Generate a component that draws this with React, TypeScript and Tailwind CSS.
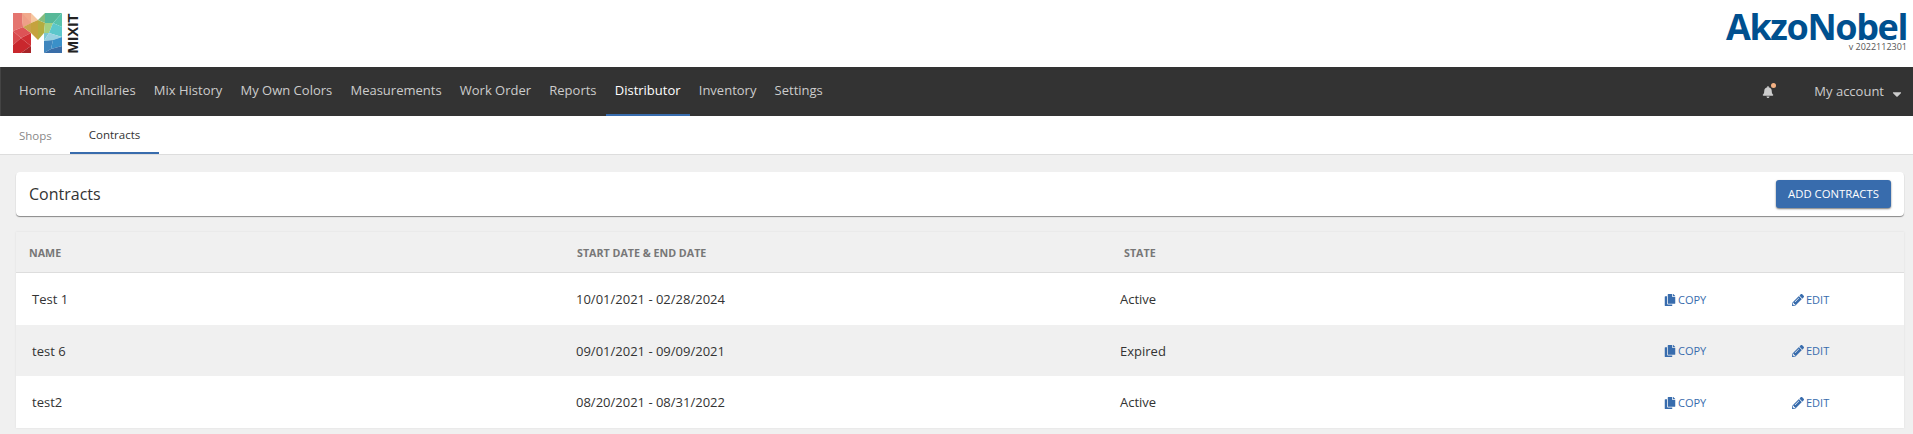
import { FaBell, FaCaretDown, FaCopy, FaPencilAlt } from "react-icons/fa";

const navItems = ["Home", "Ancillaries", "Mix History", "My Own Colors", "Measurements", "Work Order", "Reports", "Distributor", "Inventory", "Settings"];

const contracts = [
  { name: "Test 1", dates: "10/01/2021 - 02/28/2024", state: "Active" },
  { name: "test 6", dates: "09/01/2021 - 09/09/2021", state: "Expired" },
  { name: "test2", dates: "08/20/2021 - 08/31/2022", state: "Active" },
];

const shards: [string, string][] = [
  ["0,0 9,0 10,14 0,18", "#e4756f"],
  ["9,0 18,0 18,10 10,14", "#f1a98c"],
  ["18,0 25,7 18,10", "#f5c6a0"],
  ["9,0 18,10 10,14", "#ee9f87"],
  ["0,18 10,14 18,20 8,25", "#dd5356"],
  ["0,18 8,25 0,32", "#d84a4d"],
  ["10,14 18,10 18,20", "#c9a24c"],
  ["8,25 18,20 18,33", "#cf2e33"],
  ["0,32 8,25 18,33 8,40 0,40", "#c9272d"],
  ["8,40 18,33 18,40", "#a82428"],
  ["18,10 25,7 25,27 18,20", "#c5a23e"],
  ["25,7 32,10 31,20 25,27", "#b3ad3f"],
  ["25,7 32,0 32,10", "#86bc7c"],
  ["32,0 49,0 40,10 32,10", "#57b898"],
  ["32,10 40,10 36,20 31,20", "#a3d080"],
  ["40,10 49,0 49,14", "#58c2ab"],
  ["40,10 49,14 49,24 36,20", "#5cc7cb"],
  ["31,20 36,20 31,28", "#7cc8d2"],
  ["36,20 49,24 40,27 31,28", "#97d1e0"],
  ["31,28 40,27 38,36 31,40", "#3f86bd"],
  ["40,27 49,24 49,33 38,36", "#3a90c8"],
  ["31,40 38,36 49,33 49,40", "#3a6ea8"],
];

function MixitLogo() {
  return (
    <div className="flex items-center gap-[3px] self-start">
      <svg width="50" height="40" viewBox="0 0 50 40">
        {shards.map(([points, fill]) => (
          <polygon key={points} points={points} fill={fill} />
        ))}
      </svg>
      <div className="h-10 w-[12px] flex items-center justify-center">
        <span className="-rotate-90 shrink-0 whitespace-nowrap font-['Liberation_Sans',sans-serif] font-bold text-[15px] leading-none text-[#222]">MIXIT</span>
      </div>
    </div>
  );
}

export default function App() {
  return (
    <div className="min-h-[434px] bg-[#f0f0f0] font-['Open_Sans',sans-serif] text-[#333]">
      <header className="h-[67px] bg-white flex justify-between pl-[13px] pr-[6px] pt-[13px]">
        <MixitLogo />
        <div className="flex flex-col items-end">
          <div className="text-[36px] leading-[28px] font-bold text-[#00508f] tracking-[-1.4px]">AkzoNobel</div>
          <div className="text-[9px] leading-[11px] text-[#555]">v 2022112301</div>
        </div>
      </header>

      <nav className="h-[49px] bg-[#333] flex items-stretch pl-[9px] pr-[9px] border-l border-[#444]">
        {navItems.map((item) => (
          <div
            key={item}
            className={`flex items-center px-[9.1px] pt-[1px] text-[13px] border-b-2 ${item === "Distributor" ? "text-white font-medium border-[#386cad]" : "text-[#ccc] border-transparent"}`}
          >
            {item}
          </div>
        ))}
        <div className="ml-auto flex items-center text-[#ccc]">
          <div className="relative mr-[40px]">
            <FaBell className="text-[12px]" />
            <span className="absolute -top-[3px] -right-[2px] w-[5px] h-[5px] rounded-full bg-[#f4b183]" />
          </div>
          <span className="text-[13px] mr-[6px]">My account</span>
          <FaCaretDown className="text-[14px] mt-[4px]" />
        </div>
      </nav>

      <div className="h-[39px] bg-white border-b border-[#ddd] flex text-[11.5px]">
        <div className="w-[70px] pl-[19px] pt-[2px] flex items-center text-[#888]">Shops</div>
        <div className="w-[89px] pt-[2px] flex items-center justify-center border-b-2 border-[#386cad]">Contracts</div>
      </div>

      <div className="px-[16px] pr-[9px] pt-[17px]">
        <div className="h-[44px] bg-white rounded-[4px] shadow-[0_1px_1px_#888] flex items-center justify-between pl-[13px] pr-[13px]">
          <span className="text-[16px]">Contracts</span>
          <button className="h-[28px] w-[115px] rounded-[3px] bg-[#386cad] text-white text-[11.3px] shadow-[0_1px_2px_#777]">ADD CONTRACTS</button>
        </div>

        <div className="mt-[16px] shadow-[0_0_2px_#ddd]">
          <div className="h-[41px] pt-[2px] flex items-center border-b border-[#ddd] text-[10.7px] font-bold text-[#777]">
            <div className="w-[548px] pl-[13px]">NAME</div>
            <div className="w-[547px] pl-[13px]">START DATE &amp; END DATE</div>
            <div className="pl-[13px]">STATE</div>
          </div>
          {contracts.map((row, i) => (
            <div key={row.name} className={`h-[51.5px] pt-[2px] flex items-center text-[13px] ${i % 2 === 0 ? "bg-white" : "bg-[#f0f0f0]"}`}>
              <div className="w-[560px] pl-[16px]">{row.name}</div>
              <div className="w-[544px]">{row.dates}</div>
              <div className="w-[544px]">{row.state}</div>
              <div className="w-[128px] flex items-center gap-[2px] text-[11px] text-[#386cad]">
                <FaCopy className="text-[12px]" />
                COPY
              </div>
              <div className="flex items-center gap-[2px] text-[11px] text-[#386cad]">
                <FaPencilAlt className="text-[12px]" />
                EDIT
              </div>
            </div>
          ))}
        </div>
      </div>
    </div>
  );
}
